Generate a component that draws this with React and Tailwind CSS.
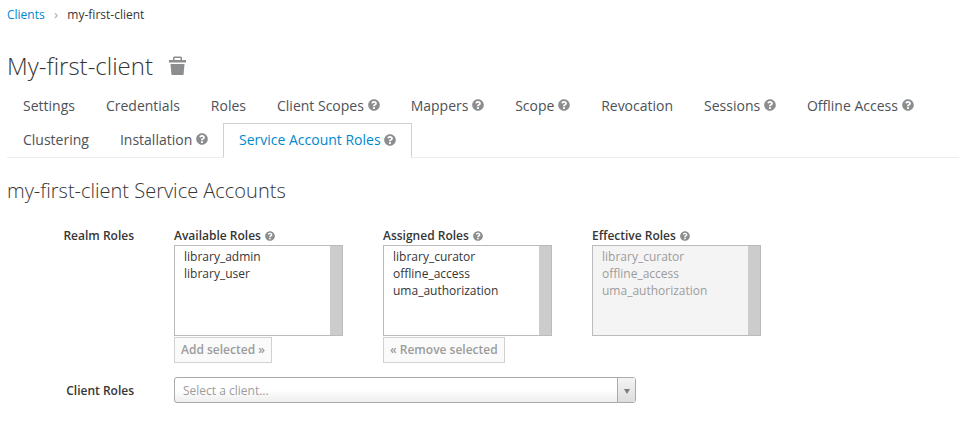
import { FaQuestionCircle } from 'react-icons/fa';

const tabsOne = [
  ['Settings', false],
  ['Credentials', false],
  ['Roles', false],
  ['Client Scopes', true],
  ['Mappers', true],
  ['Scope', true],
  ['Revocation', false],
  ['Sessions', true],
  ['Offline Access', true],
];

function Tab({ label, help, active }) {
  return (
    <a
      className={
        active
          ? 'flex h-[35px] -mb-px items-center gap-[3.75px] border border-b-white border-[#d1d1d1] px-[14.5px] pb-[2px] text-[#0088ce]'
          : 'flex h-[34px] items-center gap-[3.75px] border border-transparent px-[14.5px] pb-[2px] text-[#4d5258]'
      }
    >
      {label}
      {help && <FaQuestionCircle className="text-[12px] text-[#8b8d8f]" />}
    </a>
  );
}

function RoleList({ title, items, disabled, action }) {
  return (
    <div className="w-[169px] mr-[40px]">
      <div className="flex h-[20px] items-center gap-1 pt-[2px] text-[12px] font-semibold text-[#363636]">
        {title}
        <FaQuestionCircle className="text-[10px] text-[#8b8d8f]" />
      </div>
      <div className={`flex h-[91px] border border-[#bbbbbb] ${disabled ? 'bg-[#f4f4f4] text-[#9c9c9c]' : 'bg-white text-[#363636]'}`}>
        <ul className="flex-1 pl-[9px] pt-[2px] text-[12px] leading-[17px]">
          {items.map((item) => (
            <li key={item}>{item}</li>
          ))}
        </ul>
        <div className="w-[12px] bg-[#cccccc]" />
      </div>
      {action && (
        <button className="h-[26px] border border-[#d1d1d1] bg-[#fafafa] px-[6px] text-[12px] font-semibold text-[#9c9c9c]">
          {action}
        </button>
      )}
    </div>
  );
}

export default function App() {
  return (
    <div className="h-[436px] overflow-hidden bg-white pl-[7px] font-['Open_Sans',sans-serif] text-[#363636]">
      <div className="flex h-[30px] items-center text-[12px]">
        <a className="text-[#0088ce]">Clients</a>
        <span className="mx-[9.5px] text-[#9c9c9c]">›</span>
        <span>my-first-client</span>
      </div>

      <div className="mt-[18px] flex h-[36px] items-center">
        <h1 className="text-[24px] font-light leading-none">My-first-client</h1>
        <svg className="ml-[16px] -mt-[2px]" width="17" height="19" viewBox="0 0 17 19">
          <path d="M4 4V1.500L5 0.500H12L13 1.500V4H11.500V2H5.500V4z" fill="#8b8d8f" />
          <rect x="0" y="4" width="17" height="2.500" fill="#8b8d8f" />
          <path d="M1.500 8H15.500L14.500 19H2.500z" fill="#8b8d8f" />
        </svg>
      </div>

      <div className="mt-[5px] flex flex-wrap border-b border-[#ededed] pl-[0.5px] text-[14px]">
        {tabsOne.map(([label, help]) => (
          <Tab key={label} label={label} help={help} />
        ))}
        <div className="basis-full" />
        <Tab label="Clustering" />
        <Tab label="Installation" help />
        <Tab label="Service Account Roles" help active />
      </div>

      <h2 className="mt-[19px] h-[27px] text-[20px] font-light leading-[27px]">my-first-client Service Accounts</h2>

      <div className="mt-[21px] flex">
        <div className="w-[127px] pt-[2px] text-right text-[12px] font-semibold leading-[18px]">Realm Roles</div>
        <div className="ml-[40px] flex">
          <RoleList title="Available Roles" items={['library_admin', 'library_user']} action="Add selected »" />
          <RoleList
            title="Assigned Roles"
            items={['library_curator', 'offline_access', 'uma_authorization']}
            action="« Remove selected"
          />
          <RoleList title="Effective Roles" items={['library_curator', 'offline_access', 'uma_authorization']} disabled />
        </div>
      </div>

      <div className="mt-[14px] flex items-center">
        <div className="w-[127px] pt-[2px] text-right text-[12px] font-semibold">Client Roles</div>
        <div className="ml-[40px] flex h-[26px] w-[462px] items-center rounded-[3px] border border-[#aaaaaa] bg-gradient-to-b from-white from-50% to-[#eeeeee] text-[12px] text-[#9c9c9c]">
          <span className="flex-1 pl-[8px] pt-[2px]">Select a client...</span>
          <span className="flex h-full w-[18px] items-center justify-center border-l border-[#aaaaaa] bg-gradient-to-b from-[#f4f4f4] to-[#dddddd] pt-[2px]">
            <svg width="6" height="5" viewBox="0 0 6 5"><path d="M0 0h6L3 5z" fill="#7d7d7d" /></svg>
          </span>
        </div>
      </div>
    </div>
  );
}
